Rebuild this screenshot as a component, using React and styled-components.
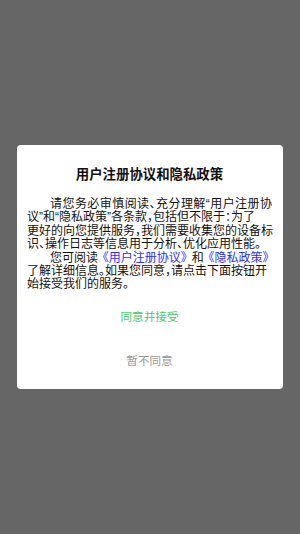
import React from "react";
import styled, { createGlobalStyle } from "styled-components";

const Global = createGlobalStyle`
  html, body { margin: 0; padding: 0; }
  body {
    background: #666666;
    font-family: "Liberation Sans", "Noto Sans CJK SC", sans-serif;
  }
`;

const Overlay = styled.div`
  width: 300px;
  height: 534px;
  background: #666666;
  display: flex;
  align-items: flex-start;
  justify-content: center;
  padding-top: 145px;
  box-sizing: border-box;
`;

const Dialog = styled.div`
  width: 266px;
  background: #ffffff;
  border-radius: 4px;
  box-sizing: border-box;
  padding: 21px 11px 7px 10px;
  display: flex;
  flex-direction: column;
`;

const Title = styled.h2`
  margin: 0;
  font-size: 13.4px;
  line-height: 18px;
  font-weight: bold;
  color: #111;
  text-align: center;
`;

const Body = styled.div`
  margin-top: 14px;
  font-size: 12px;
  line-height: 13.4px;
  color: #111;
  font-feature-settings: "halt";
`;

const Para = styled.p`
  margin: 0;
`;

const Line = styled.span`
  display: block;
  white-space: nowrap;
  text-indent: ${(p) => (p.$indent ? "23px" : "0")};
  text-align: ${(p) => (p.$justify ? "justify" : "left")};
  text-align-last: ${(p) => (p.$justify ? "justify" : "auto")};
`;

const Link = styled.span`
  color: #2f2fff;
  margin: 0 1.5px;
`;

const Actions = styled.div`
  margin-top: 2px;
  display: flex;
  flex-direction: column;
`;

const Button = styled.button`
  display: block;
  width: 100%;
  height: 44px;
  border: none;
  background: transparent;
  padding: 0;
  font-family: "Liberation Sans", "Noto Sans CJK SC", sans-serif;
  font-size: 11.6px;
  color: ${(p) => (p.$primary ? "#4dcb66" : "#999999")};
  cursor: pointer;
`;

export default function App() {
  return (
    <>
      <Global />
      <Overlay>
        <Dialog>
          <Title>用户注册协议和隐私政策</Title>
          <Body>
            <Para>
              <Line $indent $justify>请您务必审慎阅读、充分理解“用户注册协</Line>
              <Line>议”和“隐私政策”各条款，包括但不限于：为了</Line>
              <Line $justify>更好的向您提供服务，我们需要收集您的设备标</Line>
              <Line>识、操作日志等信息用于分析、优化应用性能。</Line>
            </Para>
            <Para>
              <Line $indent>
                您可阅读 <Link>《用户注册协议》</Link> 和 <Link>《隐私政策》</Link>
              </Line>
              <Line>了解详细信息。如果您同意，请点击下面按钮开</Line>
              <Line>始接受我们的服务。</Line>
            </Para>
          </Body>
          <Actions>
            <Button $primary>同意并接受</Button>
            <Button>暂不同意</Button>
          </Actions>
        </Dialog>
      </Overlay>
    </>
  );
}
